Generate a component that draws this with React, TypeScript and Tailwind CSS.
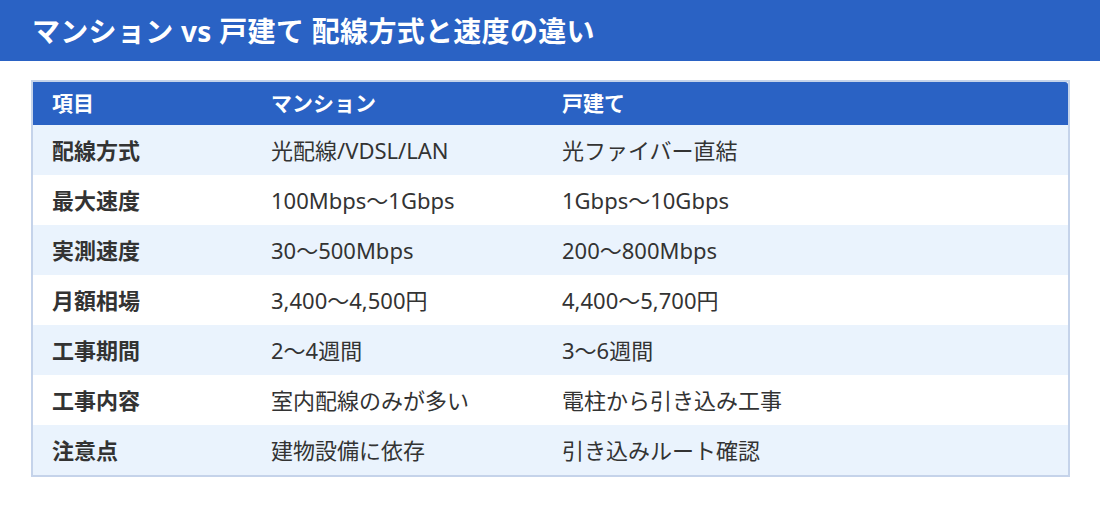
const rows = [
  ["配線方式", "光配線/VDSL/LAN", "光ファイバー直結"],
  ["最大速度", "100Mbps〜1Gbps", "1Gbps〜10Gbps"],
  ["実測速度", "30〜500Mbps", "200〜800Mbps"],
  ["月額相場", "3,400〜4,500円", "4,400〜5,700円"],
  ["工事期間", "2〜4週間", "3〜6週間"],
  ["工事内容", "室内配線のみが多い", "電柱から引き込み工事"],
  ["注意点", "建物設備に依存", "引き込みルート確認"],
];

export default function App() {
  return (
    <div className="w-[1100px] h-[520px] bg-white font-['Noto_Sans','Noto_Sans_CJK_JP',sans-serif] text-[#333]">
      <div className="h-[61px] bg-[#2a62c4] flex items-center px-8">
        <h1 className="text-[28px] font-bold text-white tracking-[0.3px]">
          マンション vs 戸建て 配線方式と速度の違い
        </h1>
      </div>
      <div className="mx-[31px] mt-[19px] w-[1039px] border-2 border-[#c5d3ea]">
        <div className="h-[43px] bg-[#2a62c4] text-white font-bold text-[21px] flex items-center rounded-tr-[3px]">
          <div className="w-[219px] pl-[19px]">項目</div>
          <div className="w-[291px] pl-[19px]">マンション</div>
          <div className="flex-1 pl-[19px]">戸建て</div>
        </div>
        {rows.map((r, i) => (
          <div
            key={r[0]}
            className={`h-[50px] flex items-center text-[22px] ${i % 2 === 0 ? "bg-[#eaf3fd]" : "bg-white"}`}
          >
            <div className="w-[219px] pl-[19px] font-bold">{r[0]}</div>
            <div className="w-[291px] pl-[19px]">{r[1]}</div>
            <div className="flex-1 pl-[19px]">{r[2]}</div>
          </div>
        ))}
      </div>
    </div>
  );
}
